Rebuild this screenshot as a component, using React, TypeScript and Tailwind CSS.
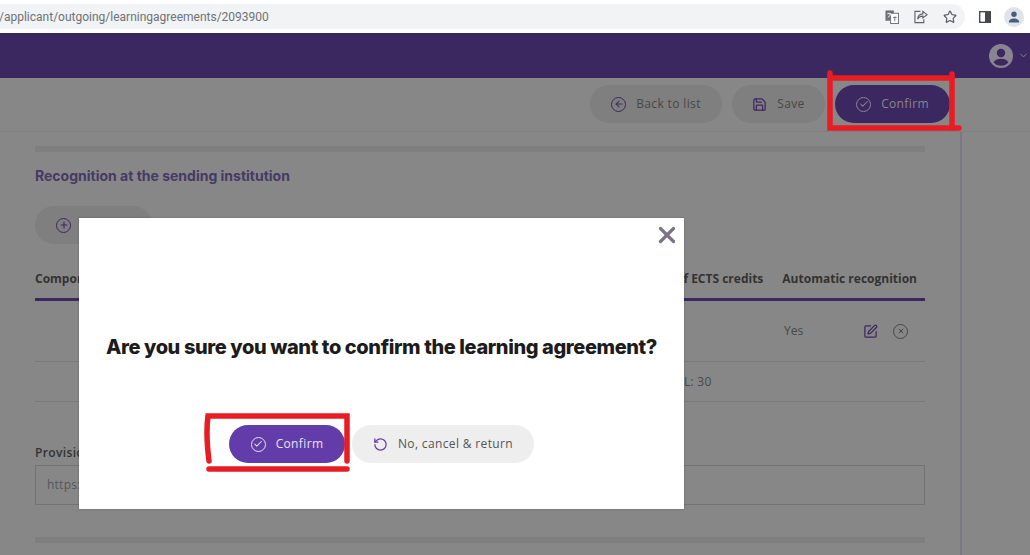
import {
  ArrowLeft,
  Check,
  ChevronDown,
  Plus,
  RotateCcw,
  Save,
  SquarePen,
  Star,
  X,
} from "lucide-react";
import type { ReactNode } from "react";

const sans = "font-['Open_Sans',sans-serif]";

function CircleIcon({ children, className }: { children: ReactNode; className: string }) {
  return (
    <span className={`flex h-[15px] w-[15px] items-center justify-center rounded-full border-[1.5px] ${className}`}>
      {children}
    </span>
  );
}

function PillButton({
  icon,
  label,
  className,
}: {
  icon: ReactNode;
  label: string;
  className: string;
}) {
  return (
    <button className={`flex h-[38px] items-center gap-[10px] rounded-full text-xs font-normal tracking-[0.03em] ${className}`}>
      {icon}
      {label}
    </button>
  );
}

function BrowserBar() {
  return (
    <div className="flex h-[33px] items-start bg-white pt-[4px]">
      <div className="flex h-[25px] flex-1 items-center justify-between rounded-r-full bg-[#f1f3f4] pr-[8px]">
        <span className="-ml-[1px] font-['Roboto',sans-serif] text-[12px] text-[#6f7276]">
          /applicant/outgoing/learningagreements/2093900
        </span>
        <div className="flex items-center gap-[15px] text-[#555a5f]">
          <svg width="14" height="14" viewBox="0 0 15 15">
            <rect x="0.5" y="0.5" width="9" height="11" fill="#6d7175" />
            <rect x="6" y="3.5" width="8.5" height="11" fill="#fff" stroke="#6d7175" />
            <path d="M2.5 4h4M4.5 3v1M3 8c1.5-.7 2.5-2 3-4" stroke="#fff" fill="none" />
            <path d="M8.5 8h4M10.5 7v5" stroke="#6d7175" fill="none" />
          </svg>
          <svg width="14" height="14" viewBox="0 0 15 15" fill="none" stroke="#5f6368" strokeWidth="1.2">
            <path d="M7 1.5H1v12h9.5V10" />
            <path d="M9.5 1.5l4.5 3.5-4.5 3.5V6.6C7 6.6 5 7.6 4 10c0-3.4 2.3-5.6 5.5-5.8z" />
          </svg>
          <Star size={14} strokeWidth={2} />
        </div>
      </div>
      <div className="flex h-[25px] w-[39px] items-center pl-[14px]">
        <svg width="12" height="12" viewBox="0 0 13 13" className="shrink-0">
          <rect x="0.75" y="0.75" width="11.5" height="11.5" fill="none" stroke="#45494e" strokeWidth="1.5" />
          <rect x="6.5" y="1" width="6" height="11" fill="#45494e" />
        </svg>
      </div>
      <div className="mr-[6px] mt-[3px] flex h-[20px] w-[20px] items-center justify-center rounded-full bg-[#dfe3ec]">
        <svg width="12" height="12" viewBox="0 0 12 12" fill="#4a5d78">
          <circle cx="6" cy="3.3" r="2.7" />
          <path d="M0.8 11.5c0-2.6 2.5-3.9 5.2-3.9s5.2 1.3 5.2 3.9z" />
        </svg>
      </div>
    </div>
  );
}

function Header() {
  return (
    <div className="flex h-[45px] items-center justify-end gap-[5px] bg-[#3b2860] pr-[1px]">
      <svg width="24" height="24" viewBox="0 0 24 24">
        <circle cx="12" cy="12" r="12" fill="#8a8490" />
        <circle cx="12" cy="9" r="4.2" fill="#3b2860" />
        <path d="M4.5 18.5c1.5-2.7 4.5-3.7 7.5-3.7s6 1 7.5 3.7c-1.8 2-4.5 3.3-7.5 3.3s-5.7-1.3-7.5-3.3z" fill="#3b2860" />
      </svg>
      <ChevronDown size={11} className="text-[#8a8490]" />
    </div>
  );
}

function Toolbar() {
  return (
    <div className="flex h-[54px] items-start justify-end gap-[10px] border-b border-[#7f7f7f] pr-[80px] pt-[7px]">
      <PillButton
        className="w-[132px] justify-center bg-[#7f7f7f] text-[#474747]"
        label="Back to list"
        icon={
          <CircleIcon className="border-[#3b2860] text-[#3b2860]">
            <ArrowLeft size={10} strokeWidth={2.5} />
          </CircleIcon>
        }
      />
      <PillButton
        className="w-[93px] justify-center bg-[#7f7f7f] text-[#474747]"
        label="Save"
        icon={<Save size={15} className="text-[#3b2860]" />}
      />
      <PillButton
        className="w-[115px] justify-center bg-[#3b2860] text-[#8a8490]"
        label="Confirm"
        icon={
          <CircleIcon className="border-[#8a8490] text-[#8a8490]">
            <Check size={10} strokeWidth={2.5} />
          </CircleIcon>
        }
      />
    </div>
  );
}

function Content() {
  return (
    <div className="flex">
      <main className="h-[423px] w-[962px] border-r-2 border-[#7c7787] px-[35px] pt-[14px]">
        <div className="h-[6px] bg-[#7f7f7f]" />
        <h2 className="mt-[14px] font-['Inter',sans-serif] text-sm font-bold leading-[20px] text-[#463a66]">
          Recognition at the sending institution
        </h2>
        <PillButton
          className="mt-[20px] w-[117px] bg-[#7f7f7f] pl-[21px] text-[#474747]"
          label="Add"
          icon={
            <CircleIcon className="border-[#3b2860] text-[#3b2860]">
              <Plus size={10} strokeWidth={2.5} />
            </CircleIcon>
          }
        />
        <div className="mt-[24px] flex h-[33px] items-start justify-between border-b-[3px] border-[#3b2860] pr-[8px] text-xs font-bold leading-[21px] text-[#333]">
          <span>Component</span>
          <div className="flex gap-[19px]">
            <span>Number of ECTS credits</span>
            <span>Automatic recognition</span>
          </div>
        </div>
        <div className="flex h-[61px] items-center border-b border-[#7a7a7a] pl-[749px] text-xs text-[#474747]">
          <span className="w-[79px]">Yes</span>
          <SquarePen size={15} className="text-[#3b2860]" />
          <CircleIcon className="ml-[15px] border-[#474747] text-[#474747]">
            <X size={8} strokeWidth={3} />
          </CircleIcon>
        </div>
        <div className="flex h-[40px] items-center border-b border-[#7a7a7a] pl-[618px] text-xs tracking-[0.02em] text-[#474747]">
          TOTAL: 30
        </div>
        <label className="mt-[42px] block text-xs font-semibold leading-[18px] tracking-[0.03em] text-[#333]">
          Provisional transcript
        </label>
        <div className="mt-[3px] flex h-[40px] items-center border border-[#737373] pl-[11px] text-xs tracking-[0.02em] text-[#55585c]">
          https://
        </div>
        <div className="mt-[32px] h-[6px] bg-[#7f7f7f]" />
      </main>
    </div>
  );
}

function ConfirmModal() {
  return (
    <div className="absolute left-[79px] top-[218px] flex h-[291px] w-[605px] flex-col items-center bg-white shadow-[0_0_2px_rgba(0,0,0,0.25)]">
      <button className="absolute right-[4px] top-[4px] text-[#7d7287]">
        <X size={26} strokeWidth={3} />
      </button>
      <h1 className="mt-[115px] font-['Inter',sans-serif] text-[20px] font-extrabold leading-[28px] tracking-[-0.02em] text-[#1c1c1c]">
        Are you sure you want to confirm the learning agreement?
      </h1>
      <div className="mt-[64px] flex gap-[7px]">
        <PillButton
          className="w-[116px] justify-center bg-[#623ca8] text-[#e8e2f4]"
          label="Confirm"
          icon={
            <CircleIcon className="border-[#e8e2f4] text-[#e8e2f4]">
              <Check size={10} strokeWidth={2.5} />
            </CircleIcon>
          }
        />
        <PillButton
          className="w-[182px] justify-center bg-[#eeeeee] text-[#555]"
          label="No, cancel & return"
          icon={<RotateCcw size={15} className="text-[#623ca8]" />}
        />
      </div>
    </div>
  );
}

// the red marker strokes drawn on the screenshot
function Annotations() {
  return (
    <svg className="pointer-events-none absolute inset-0" width="1030" height="555" fill="none" stroke="#e91c23" strokeLinecap="round" strokeWidth="5.5">
      <path d="M830 73V128H959" />
      <path d="M830 78H952" />
      <path d="M952 74V128" />
      <path d="M209 461C207 445 206 430 208 416H347V461" />
      <path d="M209 469H347" />
    </svg>
  );
}

export default function App() {
  return (
    <div className={`relative h-[555px] w-[1030px] overflow-hidden bg-[#878787] ${sans}`}>
      <BrowserBar />
      <Header />
      <Toolbar />
      <Content />
      <ConfirmModal />
      <Annotations />
    </div>
  );
}
